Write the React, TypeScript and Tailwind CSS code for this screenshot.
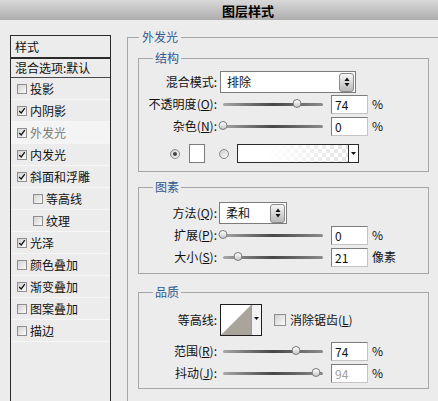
import React from 'react';

type LeftItem = { label: string; checked: boolean; indent?: boolean; active?: boolean };

const leftItems: LeftItem[] = [
  { label: '投影', checked: false },
  { label: '内阴影', checked: true },
  { label: '外发光', checked: true, active: true },
  { label: '内发光', checked: true },
  { label: '斜面和浮雕', checked: true },
  { label: '等高线', checked: false, indent: true },
  { label: '纹理', checked: false, indent: true },
  { label: '光泽', checked: true },
  { label: '颜色叠加', checked: false },
  { label: '渐变叠加', checked: true },
  { label: '图案叠加', checked: false },
  { label: '描边', checked: false },
];

function CheckBox({ checked, size = 10 }: { checked: boolean; size?: number }) {
  return (
    <div
      className="relative shrink-0 border border-[#8e8e8e] bg-gradient-to-br from-[#d2d2d2] to-[#fbfbfb]"
      style={{ width: size, height: size }}
    >
      {checked && (
        <svg viewBox="0 0 10 10" className="absolute inset-0 w-full h-full">
          <path d="M1.5 5 L4 7.5 L8.5 1.5" stroke="#111" strokeWidth="1.6" fill="none" />
        </svg>
      )}
    </div>
  );
}

function Spinner() {
  return (
    <div className="w-[15px] h-[19px] rounded-[3px] border border-[#8a8a8a] bg-gradient-to-b from-[#f7f7f7] to-[#b9b9b9] flex items-center justify-center">
      <svg width="6" height="10" viewBox="0 0 6 10">
        <path d="M3 0.5 L5.5 4 L0.5 4 Z" fill="#111" />
        <path d="M3 9.5 L5.5 6 L0.5 6 Z" fill="#111" />
      </svg>
    </div>
  );
}

function Select({ value, width }: { value: string; width: number }) {
  return (
    <div
      className="h-[22px] border border-[#7c7c7c] bg-white flex items-center justify-between pl-[6px] pr-[1px]"
      style={{ width }}
    >
      <span>{value}</span>
      <Spinner />
    </div>
  );
}

function Slider({ pct }: { pct: number }) {
  return (
    <div className="relative w-[100px] h-[12px] flex items-center shrink-0">
      <div className="w-full h-[3px] rounded-full bg-gradient-to-r from-[#a8a8a8] via-[#474747] to-[#8c8c8c]" />
      <div
        className="absolute top-[1px] -translate-x-1/2 w-[9px] h-[9px] rounded-full border border-[#7b7b7b] bg-gradient-to-b from-white to-[#c8c8c8]"
        style={{ left: `${pct}%` }}
      />
    </div>
  );
}

function NumBox({ value, faded }: { value: string; faded?: boolean }) {
  return (
    <div
      className={`w-[37px] h-[19px] border border-[#7c7c7c] border-b-[#c4c4c4] border-r-[#c4c4c4] bg-white pl-[3px] leading-[17px] shrink-0 ${
        faded ? 'text-[#a0a0a0]' : ''
      }`}
    >
      {value}
    </div>
  );
}

function Label({ text, mn }: { text: string; mn?: string }) {
  return (
    <div className="w-[78px] text-right shrink-0 whitespace-nowrap">
      {text}
      {mn && (
        <>
          (<span className="underline">{mn}</span>)
        </>
      )}
      :
    </div>
  );
}

function SliderRow({ text, mn, pct, value, unit, faded }: { text: string; mn: string; pct: number; value: string; unit: string; faded?: boolean }) {
  return (
    <div className="h-[22px] flex items-center">
      <Label text={text} mn={mn} />
      <div className="ml-[6px]">
        <Slider pct={pct} />
      </div>
      <div className="ml-[8px]">
        <NumBox value={value} faded={faded} />
      </div>
      <span className="ml-[4px]">{unit}</span>
    </div>
  );
}

function Radio({ checked }: { checked: boolean }) {
  return (
    <div className="w-[10px] h-[10px] rounded-full border border-[#8a8a8a] bg-gradient-to-br from-[#cfcfcf] to-[#f8f8f8] flex items-center justify-center shrink-0">
      {checked && <div className="w-[4px] h-[4px] rounded-full bg-[#444]" />}
    </div>
  );
}

function Group({ title, children, className = '' }: { title: string; children: React.ReactNode; className?: string }) {
  return (
    <fieldset className={`border border-[#a6a6a6] ${className}`}>
      <legend className="ml-[14px] px-[2px] leading-[14px] text-[#2e5a93]">{title}</legend>
      {children}
    </fieldset>
  );
}

export default function App() {
  return (
    <div className="w-[438px] h-[401px] overflow-hidden bg-[#ececec] text-[12px] text-[#111] font-['Noto_Sans_CJK_SC','Noto_Sans',sans-serif]">
      {/* title bar */}
      <div className="h-[20px] bg-gradient-to-b from-[#d9d9d9] via-[#c4c4c4] to-[#acacac] flex items-center pl-[222px]">
        <span className="font-bold text-[13px] leading-none text-black">图层样式</span>
      </div>

      <div className="flex items-start">
        {/* left style list */}
        <div className="ml-[10px] mt-[15px] w-[101px] h-[380px] border border-[#2b2b2b] shrink-0">
          <div className="h-[23px] pl-[4px] flex items-center border-b-2 border-[#2b2b2b]">样式</div>
          <div className="h-[19px] pl-[4px] flex items-center border-b border-[#4a4a4a] whitespace-nowrap">混合选项:默认</div>
          {leftItems.map((item, i) => (
            <div
              key={i}
              className={`h-[22px] flex items-center gap-[3px] border-b border-[#f6f6f6] ${item.indent ? 'pl-[22px]' : 'pl-[6px]'} ${
                item.active ? 'bg-[#f4f4f4] text-[#7a7a7a]' : ''
              }`}
            >
              <CheckBox checked={item.checked} />
              <span>{item.label}</span>
            </div>
          ))}
        </div>

        {/* right settings */}
        <fieldset className="ml-[16px] mt-[10px] w-[330px] h-[400px] border border-[#a6a6a6] shrink-0">
          <legend className="ml-[11px] px-[3px] leading-[14px] text-[#2e5a93]">外发光</legend>
          <div className="pt-[7px] pl-[10px]">
            {/* 结构 */}
            <Group title="结构" className="w-[291px]">
              <div className="pt-[6px] pb-[8px]">
                <div className="h-[22px] flex items-center">
                  <Label text="混合模式" />
                  <div className="ml-[3px]">
                    <Select value="排除" width={136} />
                  </div>
                </div>
                <SliderRow text="不透明度" mn="O" pct={74} value="74" unit="%" />
                <SliderRow text="杂色" mn="N" pct={0} value="0" unit="%" />
                <div className="mt-[7px] h-[19px] flex items-center pl-[31px]">
                  <Radio checked />
                  <div className="ml-[9px] w-[16px] h-[19px] border border-[#7c7c7c] bg-white" />
                  <div className="ml-[14px]">
                    <Radio checked={false} />
                  </div>
                  <div className="ml-[8px] w-[122px] h-[19px] border border-[#2b2b2b] flex">
                    <div className="flex-1 bg-[linear-gradient(to_right,#fff_25%,rgba(255,255,255,0.35)),repeating-conic-gradient(#d6d6d6_0_25%,#fff_0_50%)] bg-[length:100%_100%,8px_8px]" />
                    <div className="w-[10px] border-l border-[#2b2b2b] bg-white flex items-center justify-center">
                      <svg width="5" height="3" viewBox="0 0 5 3">
                        <path d="M0 0 L5 0 L2.5 3 Z" fill="#111" />
                      </svg>
                    </div>
                  </div>
                </div>
              </div>
            </Group>

            {/* 图素 */}
            <Group title="图素" className="w-[291px] mt-[8px]">
              <div className="pt-[8px] pb-[5px]">
                <div className="h-[22px] flex items-center">
                  <Label text="方法" mn="Q" />
                  <div className="ml-[2px]">
                    <Select value="柔和" width={68} />
                  </div>
                </div>
                <SliderRow text="扩展" mn="P" pct={0} value="0" unit="%" />
                <SliderRow text="大小" mn="S" pct={15} value="21" unit="像素" />
              </div>
            </Group>

            {/* 品质 */}
            <Group title="品质" className="w-[291px] mt-[11px]">
              <div className="pt-[5px] pb-[4px]">
                <div className="h-[32px] flex items-center">
                  <Label text="等高线" />
                  <div className="ml-[3px] w-[42px] h-[32px] border border-[#1e1e1e] flex bg-white">
                    <svg width="30" height="30" viewBox="0 0 30 30" className="shrink-0">
                      <path d="M0 30 L30 0 L30 30 Z" fill="#aaa59c" />
                    </svg>
                    <div className="flex-1 border-l border-[#9a9a9a] bg-[#f3f3f3] flex justify-center pt-[12px]">
                      <svg width="5" height="3" viewBox="0 0 5 3">
                        <path d="M0 0 L5 0 L2.5 3 Z" fill="#111" />
                      </svg>
                    </div>
                  </div>
                  <div className="ml-[12px] flex items-center gap-[4px]">
                    <CheckBox checked={false} size={12} />
                    <span>
                      消除锯齿(<span className="underline">L</span>)
                    </span>
                  </div>
                </div>
                <div className="mt-[4px]">
                  <SliderRow text="范围" mn="R" pct={73} value="74" unit="%" />
                  <SliderRow text="抖动" mn="J" pct={93} value="94" unit="%" faded />
                </div>
              </div>
            </Group>
          </div>
        </fieldset>
      </div>
    </div>
  );
}
